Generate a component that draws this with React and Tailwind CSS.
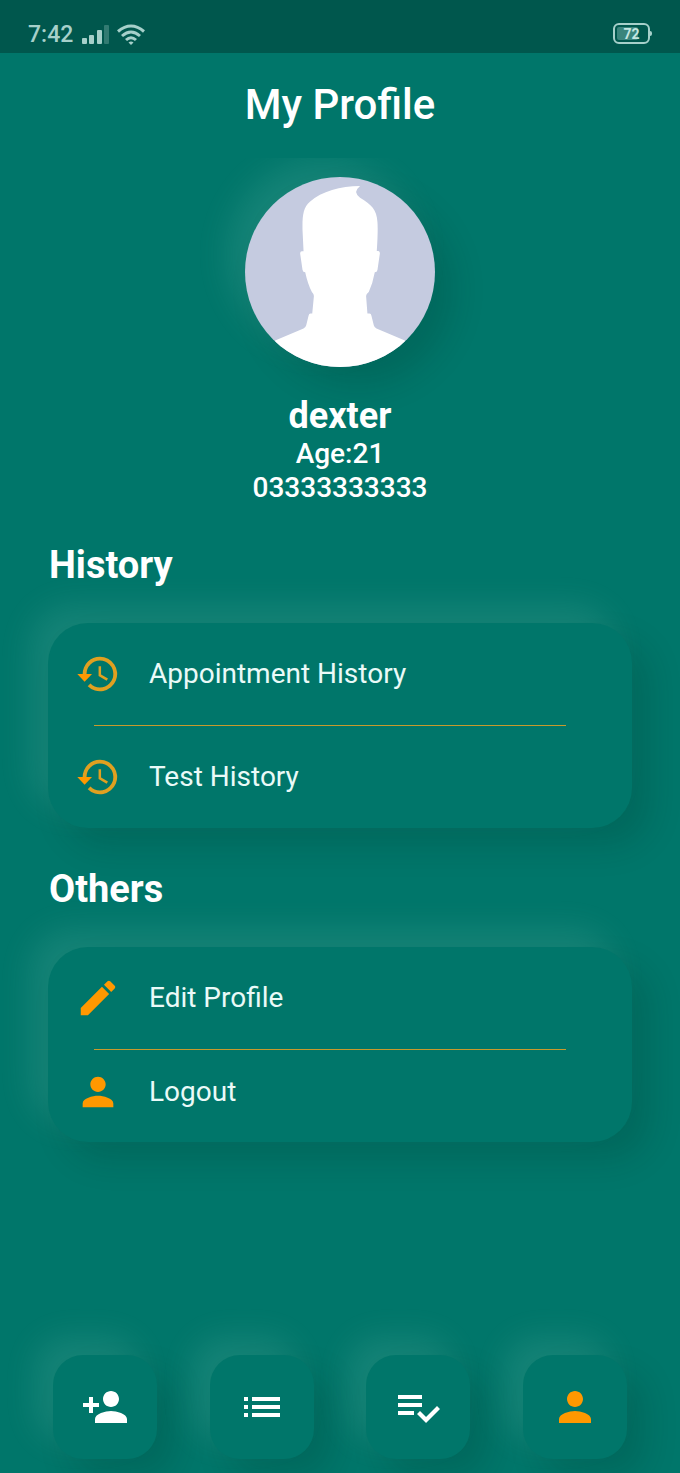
import React, { useState } from "react";
import { MdEdit, MdList, MdPerson, MdPersonAdd } from "react-icons/md";

const raised =
  "bg-[#00766a] shadow-[-18px_-18px_32px_rgba(170,230,215,0.12),18px_18px_32px_rgba(0,40,32,0.17)]";

const HistoryIcon = ({ className }) => (
  <svg viewBox="0 0 24 24" className={className} aria-hidden="true">
    <path
      fill="#e0a020"
      d="M13 3a9 9 0 0 0-9 9h2a7 7 0 1 1 7 7c-1.930 0-3.680-.790-4.940-2.060l-1.420 1.420A9 9 0 1 0 13 3zm-.7 5v5l4.200 2.500.7-1.150-3.600-2.150V8z"
    />
    <path fill="#ff9800" d="M1.200 12h7.700L5 16z" />
  </svg>
);

const ChecklistIcon = ({ className }) => (
  <svg viewBox="0 0 24 24" fill="currentColor" className={className} aria-hidden="true">
    <path d="M14 10H2v2h12v-2zm0-4H2v2h12V6zM2 16h8v-2H2v2zm19.500-4.500L23 13l-6.990 7-4.510-4.500L13 14l3.010 3 5.490-5.500z" />
  </svg>
);

const Avatar = () => (
  <svg
    viewBox="0 0 568 568"
    role="img"
    aria-label="Profile picture"
    className="size-[190px] rounded-full bg-[#c5cbe0] shadow-[-18px_-18px_32px_rgba(170,230,215,0.12),18px_18px_32px_rgba(0,40,32,0.17)]"
  >
    <path
      fill="#fff"
      d="M90 489L175 453Q181 450 183 443L190 415Q191 408 196 408H201L206 356Q206 350 200 344Q188 322 180 285Q173 285 172 278L165 230Q164 222 170 222H175L172 160C171 115 174 92 194 74C230 42 285 28 344 27Q333 36 332 45Q333 54 344 62C378 82 394 98 396 135Q398 160 394 221H399Q404 222 403 230L396 278Q395 285 388 285Q382 318 370 344Q362 350 362 356L366 408H372Q377 408 378 415L385 443Q387 450 393 453L478 489V568H90z"
    />
  </svg>
);

const StatusBar = () => (
  <div className="h-[53px] shrink-0 bg-[#00574d] px-7 pt-4 flex items-center justify-between text-[#a6d0ca]">
    <div className="flex items-center gap-2">
      <span className="text-[23px] leading-6 font-medium">7:42</span>
      <svg viewBox="0 0 28 20" fill="currentColor" className="w-7 h-5" aria-hidden="true">
        <rect x="1" y="13" width="5" height="6" rx="1" />
        <rect x="8" y="10" width="5" height="9" rx="1" />
        <rect x="16" y="5" width="5" height="14" rx="1" />
        <rect x="23" y="0" width="5" height="19" rx="1" opacity="0.3" />
      </svg>
      <svg viewBox="0 0 28 22" fill="none" stroke="currentColor" strokeWidth="3" className="w-7 h-[22px]" aria-hidden="true">
        <path d="M1 7.500Q14 -3.500 27 7.500" />
        <path d="M5 12Q14 4 23 12" />
        <path d="M9 16Q14 11.500 19 16" />
        <path d="M11.500 18.500Q14 16.500 16.500 18.500L14 21z" fill="currentColor" stroke="none" />
      </svg>
    </div>
    <div className="relative mr-[2px] mb-[2px] w-[37px] h-[21px] rounded-md border-2 border-current p-[2px]">
      <div className="w-[21px] h-full rounded-xs bg-[#3a857c]" />
      <span className="absolute inset-0 flex items-center justify-center text-sm leading-4 font-bold text-[#c5e6e1]">72</span>
      <span className="absolute -right-1 top-[6px] w-[2px] h-[5px] rounded-r bg-current" />
    </div>
  </div>
);

const Row = ({ icon, label, compact }) => (
  <button
    type="button"
    className={`w-full flex items-center gap-7 pl-[27px] text-left text-[28px] leading-8 text-[#eafaf8] ${compact ? "h-[92px] pb-2" : "h-[102px]"}`}
  >
    {icon}
    {label}
  </button>
);

const Section = ({ title, children }) => (
  <section className="mt-[39px]">
    <h2 className="px-px text-[38px] leading-[44px] font-bold">{title}</h2>
    <div className={`mt-9 rounded-[40px] ${raised}`}>{children}</div>
  </section>
);

const Divider = () => <hr className="ml-[46px] mr-[66px] h-px border-0 bg-[#c79a2c]" />;

const tabs = [
  { id: "add", label: "Add patient", Icon: MdPersonAdd },
  { id: "list", label: "Appointments", Icon: MdList },
  { id: "tests", label: "Tests", Icon: ChecklistIcon },
  { id: "profile", label: "Profile", Icon: MdPerson },
];

const App = () => {
  const [active, setActive] = useState("profile");

  return (
    <div className="min-h-screen flex flex-col bg-[#00766a] text-white font-['Roboto',sans-serif]">
      <StatusBar />
      <header className="h-[105px] shrink-0 pb-[2px] flex items-center justify-center">
        <h1 className="text-[42px] leading-[50px] font-medium">My Profile</h1>
      </header>

      <main className="grow flex flex-col overflow-hidden">
        <div className="pt-[19px] flex flex-col items-center font-medium text-[28px] leading-[34px]">
          <Avatar />
          <p className="mt-7 text-4xl leading-[42px] font-bold">dexter</p>
          <p>Age:21</p>
          <p>03333333333</p>
        </div>

        <div className="-mt-px px-12">
          <Section title="History">
            <Row icon={<HistoryIcon className="size-[46px]" />} label="Appointment History" />
            <Divider />
            <Row icon={<HistoryIcon className="size-[46px]" />} label="Test History" />
          </Section>
          <Section title="Others">
            <Row icon={<MdEdit className="size-[46px] text-[#ff9800]" />} label="Edit Profile" />
            <Divider />
            <Row compact icon={<MdPerson className="size-[46px] text-[#ff9800]" />} label="Logout" />
          </Section>
        </div>

        <nav className="mt-auto px-[53px] pt-12 pb-[14px] flex justify-between">
          {tabs.map(({ id, label, Icon }) => (
            <button
              key={id}
              type="button"
              aria-label={label}
              onClick={() => setActive(id)}
              className={`size-[104px] rounded-[30px] flex items-center justify-center ${raised} ${active === id ? "text-[#ff9800]" : "text-white"}`}
            >
              <Icon className="size-12" />
            </button>
          ))}
        </nav>
      </main>
    </div>
  );
};

export default App;
